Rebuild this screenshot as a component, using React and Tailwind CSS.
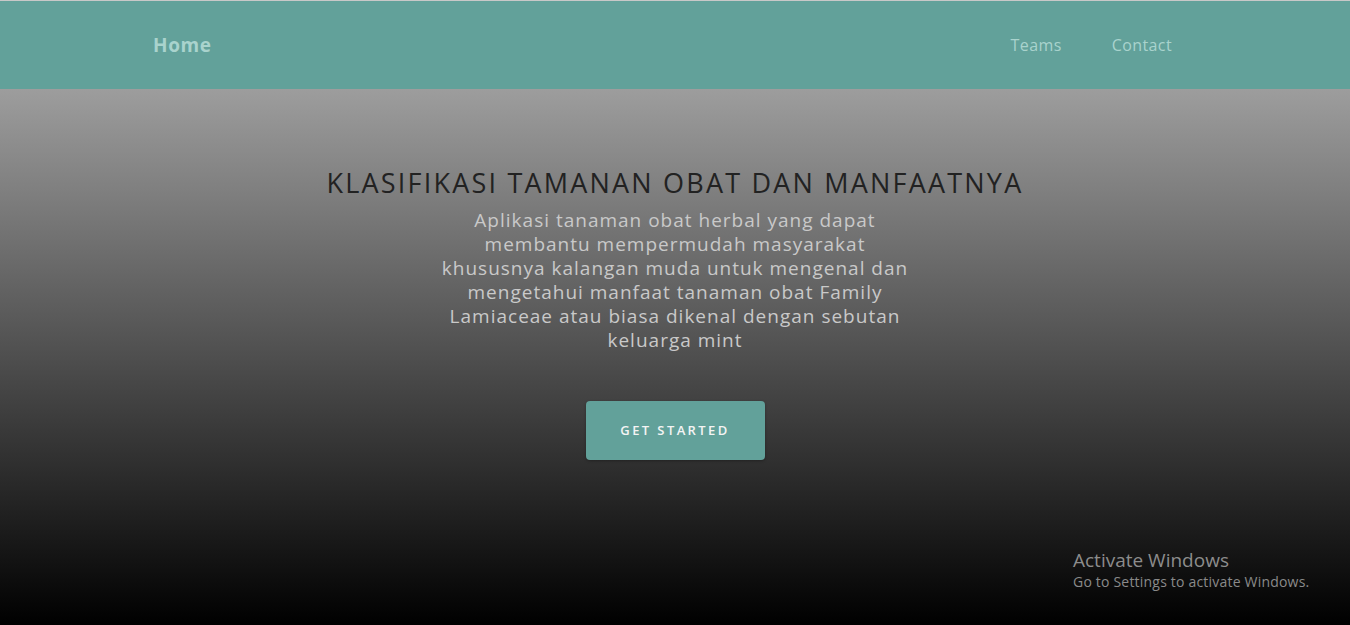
export default function App() {
  const lines = [
    "Aplikasi tanaman obat herbal yang dapat",
    "membantu mempermudah masyarakat",
    "khususnya kalangan muda untuk mengenal dan",
    "mengetahui manfaat tanaman obat Family",
    "Lamiaceae atau biasa dikenal dengan sebutan",
    "keluarga mint",
  ];
  return (
    <div className="relative flex h-[625px] w-full flex-col overflow-hidden" style={{ fontFamily: "'Open Sans', Lato, sans-serif" }}>
      <div className="h-px bg-[#c8c8c8]" />
      <nav className="flex h-[88px] items-center justify-between bg-[#62a19a] pl-[153px] pr-[178px]">
        <a className="text-[19px] font-bold tracking-[0.6px] text-[#a9d3cd]">Home</a>
        <div className="flex items-center gap-[50px] text-[16px] tracking-[0.4px] text-[#a9d3cd]">
          <a>Teams</a>
          <a>Contact</a>
        </div>
      </nav>
      <main className="flex flex-1 flex-col items-center bg-[linear-gradient(to_bottom,#9d9d9d,#000000)] pt-[76px]">
        <h1 className="text-[27px] leading-[36px] tracking-[2.2px] text-[#222]">KLASIFIKASI TAMANAN OBAT DAN MANFAATNYA</h1>
        <p className="mt-[7px] text-center text-[19px] leading-[24px] tracking-[1px] text-[#c9c9c9]">
          {lines.map((l) => (
            <span key={l} className="block whitespace-nowrap">{l}</span>
          ))}
        </p>
        <button className="mt-[49px] flex h-[59px] w-[179px] items-center justify-center rounded-[4px] bg-[#62a19a] text-[13px] font-semibold tracking-[2.4px] text-[#f4f4f4] shadow-[0_1px_3px_rgba(0,0,0,0.3)]">
          GET STARTED
        </button>
      </main>
      <div className="absolute left-[1073px] top-[548px] text-[#8c8c8c]" style={{ fontFamily: "'Open Sans', 'Noto Sans', sans-serif" }}>
        <div className="text-[19px] leading-[24px]">Activate Windows</div>
        <div className="text-[14px] leading-[20px] tracking-[0.2px] text-[#8a8a8a]">Go to Settings to activate Windows.</div>
      </div>
    </div>
  );
}
